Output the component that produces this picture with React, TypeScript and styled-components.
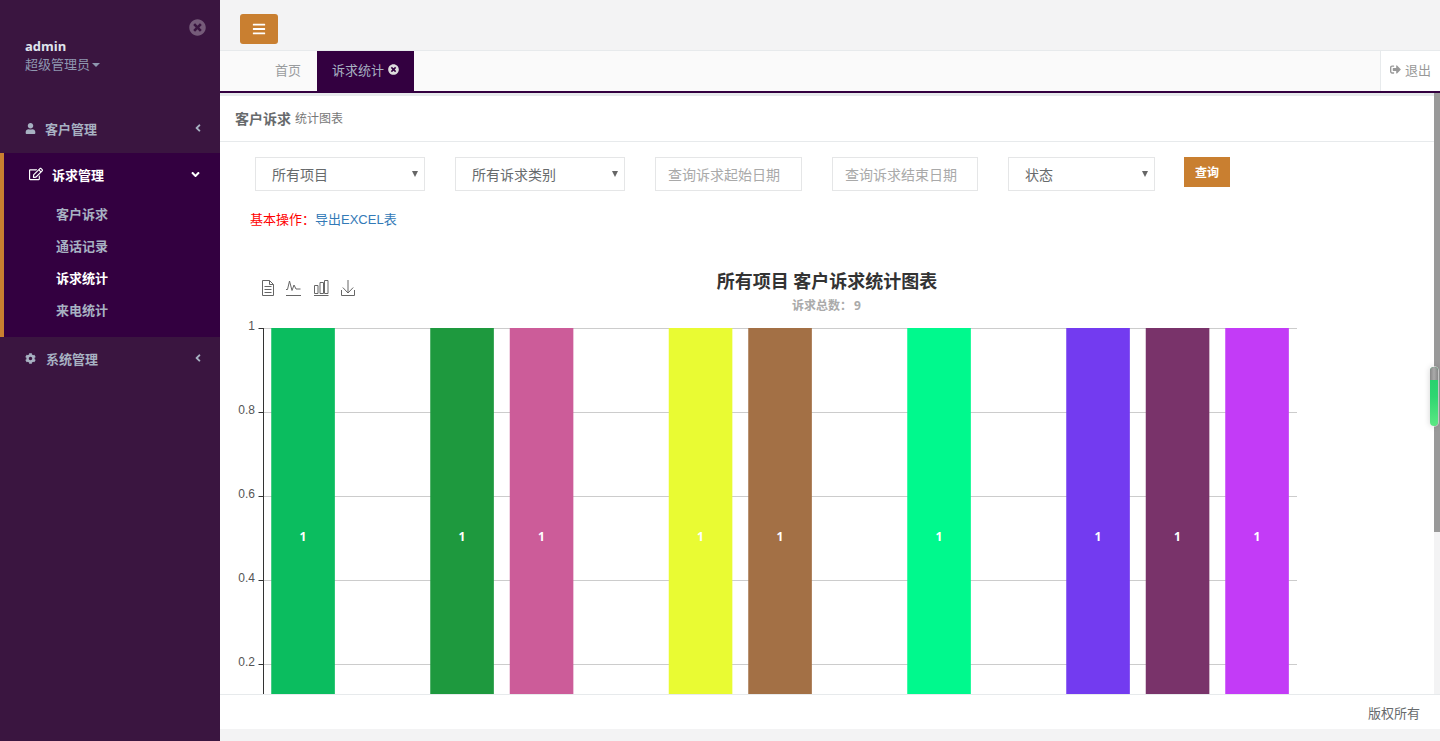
import React from "react";
import styled, { createGlobalStyle } from "styled-components";
import { FaUser, FaRegEdit, FaCog, FaAngleLeft, FaAngleDown, FaBars, FaSignOutAlt, FaTimesCircle } from "react-icons/fa";

const FONT = `"Open Sans", "Noto Sans CJK SC", sans-serif`;
const ARIAL = `"Liberation Sans", "Noto Sans CJK SC", sans-serif`;
const PURPLE = "#330040";
const ORANGE = "#c97f30";

const Global = createGlobalStyle`
  html, body { margin: 0; padding: 0; height: 100%; overflow: hidden; }
  body { font-family: ${FONT}; font-size: 13px; color: #676a6c; background: #f3f3f4; }
  #root { height: 100%; }
  * { box-sizing: border-box; }
`;

const Page = styled.div`display: flex; height: 741px; position: relative;`;

const Sidebar = styled.aside`
  position: relative; width: 220px; flex: none; background: #3a1540; color: #a7b1c2; font-weight: 700;
`;
const SideClose = styled.span`
  position: absolute; left: 189px; top: 19px; font-size: 17px; line-height: 0; color: rgba(255,255,255,.3);
`;
const Profile = styled.div`height: 107px; padding: 37px 0 0 25px;`;
const UserName = styled.div`color: #dfe4ed; font-size: 13px; font-weight: 700; line-height: 18px;`;
const Role = styled.div`color: #8f97b0; font-size: 13px; font-weight: 400; line-height: 18px; display: flex; align-items: center; gap: 2px;`;
const Caret = styled.i`border-top: 4px solid #8f97b0; border-left: 4px solid transparent; border-right: 4px solid transparent; width: 0; height: 0; margin-top: 2px;`;

const Group = styled.div<{ $active?: boolean; $pad?: number }>`
  border-left: ${p => (p.$active ? `4px solid ${ORANGE}` : "0")};
  background: ${p => (p.$active ? PURPLE : "transparent")};
  padding-bottom: ${p => p.$pad ?? 0}px;
`;
const MenuRow = styled.div<{ $active?: boolean; $gap: number }>`
  height: ${p => (p.$active ? "42px" : "44px")}; margin-bottom: ${p => (p.$active ? "3px" : "0")};
  display: flex; align-items: center;
  padding: 0 ${p => (p.$active ? "18px 0" : "16px 2px")} 25px;
  gap: ${p => p.$gap}px; font-size: 13px; color: ${p => (p.$active ? "#fff" : "#a7b1c2")};
  svg { flex: none; }
`;
const MenuLabel = styled.span`flex: 1;`;
const SubItem = styled.div<{ $active?: boolean }>`
  height: 32px; line-height: 32px; padding-left: 52px; font-size: 13px; color: ${p => (p.$active ? "#fff" : "#a7b1c2")};
`;

const Main = styled.main`flex: 1; min-width: 0; display: flex; flex-direction: column; background: #f3f3f4;`;
const TopBar = styled.div`height: 51px; flex: none; padding: 14px 0 0 20px; border-bottom: 1px solid #e7eaec;`;
const MenuBtn = styled.button`
  width: 38px; height: 30px; border: 0; border-radius: 3px; background: ${ORANGE}; color: #fff;
  display: flex; align-items: center; justify-content: center; font-size: 14px; padding: 0;
`;
const TabBar = styled.div`
  height: 42px; flex: none; display: flex; background: #fafafa; border-bottom: 2px solid ${PURPLE}; padding-left: 40px;
`;
const Tab = styled.div<{ $active?: boolean }>`
  height: 40px; padding: 0 15px 4px; display: flex; align-items: center; gap: 4px; font-size: 13px;
  margin-left: ${p => (p.$active ? "1px" : "0")};
  background: ${p => (p.$active ? PURPLE : "transparent")};
  color: ${p => (p.$active ? "#a7b1c2" : "#999c9e")};
  svg { color: #ddd; font-size: 11px; }
`;
const Logout = styled.div`
  margin-left: auto; width: 60px; height: 40px; background: #fff; border-left: 1px solid #e7eaec; color: #999;
  display: flex; align-items: center; padding: 0 0 4px 9px; gap: 4px; font-size: 13px;
  svg { font-size: 11px; }
`;
const Workspace = styled.div`position: relative; flex: 1; min-height: 0; display: flex; flex-direction: column;`;
const Band = styled.div`height: 3px; flex: none; background: #e7eaec;`;
const Scroller = styled.div`flex: 1; min-height: 0; overflow: hidden; background: #fff;`;
const ScrollTrack = styled.div`position: absolute; right: 0; top: 0; bottom: 0; width: 6px; background: #f3f3f4;`;
const ScrollThumb = styled.div`height: 439px; background: #999;`;

const PanelHead = styled.div`
  height: 46px; padding: 0 0 2px 15px; border-bottom: 1px solid #e7eaec; display: flex; align-items: center; gap: 4px;
`;
const PanelTitle = styled.b`font-size: 14px; color: #676a6c;`;
const PanelSub = styled.span`font-size: 12px; color: #777;`;
const Filters = styled.div`display: flex; align-items: flex-start; gap: 30px; padding: 15px 0 0 35px;`;
const SelectWrap = styled.div<{ $w: number }>`
  position: relative; width: ${p => p.$w}px; height: 34px;
  &::after {
    content: ""; position: absolute; right: 7px; top: 14px; width: 0; height: 0;
    border-top: 6px solid #666; border-left: 3.5px solid transparent; border-right: 3.5px solid transparent;
  }
`;
const Select = styled.select`
  width: 100%; height: 34px; appearance: none; background: #fff; border: 1px solid #e5e6e7; border-radius: 0;
  padding: 0 0 0 16px; font: 14px ${FONT}; color: #676a6c; outline: none;
`;
const DateInput = styled.input<{ $w: number }>`
  width: ${p => p.$w}px; height: 34px; border: 1px solid #e5e6e7; padding: 0 12px; font: 14px ${FONT}; outline: none;
  &::placeholder { color: #a9a9a9; opacity: 1; }
`;
const QueryBtn = styled.button`
  width: 46px; height: 30px; margin-left: -1px; border: 0; background: ${ORANGE}; color: #fff; font: 700 12px ${FONT}; padding: 0;
`;
const Ops = styled.div`padding: 19px 0 0 30px; font: 13px/20px ${ARIAL}; color: #f00;`;
const OpsLink = styled.a`color: #337ab7;`;
const ChartBox = styled.div`padding: 20px 0 0 20px;`;
const ChartSvg = styled.svg`display: block; width: 1194px; height: 666px; overflow: visible; font-family: ${FONT};`;
const TickLabel = styled.text`font-family: ${ARIAL}; font-size: 12px; fill: #555;`;

const Footer = styled.footer`
  height: 35px; flex: none; background: #fff; border-top: 1px solid #e7eaec; text-align: right; padding-right: 20px;
  line-height: 36px; font-size: 13px; color: #676a6c;
`;
const BottomGap = styled.div`height: 12px; flex: none;`;

const Slider = styled.div`
  position: absolute; left: 1430px; top: 367px; width: 8px; height: 59px; border-radius: 4px; overflow: hidden;
  background: linear-gradient(#1fa858 0, #25cf6c 8%, #2fd671 50%, #5be883 100%);
  box-shadow: 0 0 6px rgba(0,0,0,.18), 0 0 0 1px rgba(255,255,255,.6);
`;
const SliderCap = styled.div`height: 13px; background: linear-gradient(90deg, #888, #aaa 50%, #888);`;

const BAR_COLORS: (string | null)[] = ["#0bbd5f", null, "#1e993e", "#cc5c99", null, "#e9fb33", "#a37045", null, "#00f98d", null, "#733bf0", "#79336a", "#c33bf7"];
const AXIS_X = 263.5, GRID_END = 1297, TOP = 328, BOTTOM = 748;
const SLOT = (GRID_END - AXIS_X) / BAR_COLORS.length;
const TICKS = ["1", "0.8", "0.6", "0.4", "0.2"];

const Toolbox = () => (
  <g fill="none" stroke="#666" strokeWidth="1">
    <path d="M262.500 280.500h7l4 4v11h-11z M269.500 280.500v4h4 M264.500 286.500h7 M264.500 289.500h7 M264.500 292.500h7" />
    <path d="M286 289.500h1.500l2-8.500 2.500 9.500 2-5.500 2 4h4.500 M286 295.500h15" />
    <path d="M314.500 285.500h3.500v8h-3.500z M320 282.500h3.500v11h-3.500z M324.500 280.500h3.500v13h-3.500z M314 295.500h14.500" />
    <path d="M348 280v13 M342.800 287.500l5.200 5.500 5.200-5.500 M341.500 290v5.500h13v-5.500" />
  </g>
);

const Chart = () => (
  <ChartSvg viewBox="240 250 1194 666">
    <Toolbox />
    <text x="827" y="288" textAnchor="middle" fontSize="18" fontWeight="700" fill="#333">所有项目 客户诉求统计图表</text>
    <text x="826.500" y="310" textAnchor="middle" fontSize="12" fontWeight="700" fill="#aaa">{"诉求总数\uFF1A\u20099"}</text>
    {TICKS.map((t, i) => {
      const y = TOP + i * 84;
      return (
        <g key={t}>
          <line x1={AXIS_X} x2={GRID_END} y1={y + 0.5} y2={y + 0.5} stroke="#ccc" />
          <line x1={AXIS_X - 5} x2={AXIS_X} y1={y + 0.5} y2={y + 0.5} stroke="#333" />
          <TickLabel x={AXIS_X - 8.500} y={y + 2} textAnchor="end">{t}</TickLabel>
        </g>
      );
    })}
    {BAR_COLORS.map((c, i) => {
      if (!c) return null;
      const x = AXIS_X + SLOT * i + SLOT * 0.1 - 0.2;
      const w = SLOT * 0.8;
      return (
        <g key={i}>
          <rect x={x} y={TOP} width={w} height={BOTTOM - TOP} fill={c} />
          <text x={x + w / 2} y={541} textAnchor="middle" fontSize="12" fontWeight="700" fill="#fff">1</text>
        </g>
      );
    })}
    <line x1={AXIS_X} x2={AXIS_X} y1={TOP} y2={BOTTOM} stroke="#333" />
  </ChartSvg>
);

export default function App() {
  return (
    <Page>
      <Global />
      <Sidebar>
        <SideClose><FaTimesCircle /></SideClose>
        <Profile>
          <UserName>admin</UserName>
          <Role>超级管理员<Caret /></Role>
        </Profile>
        <Group $pad={2}>
          <MenuRow $gap={9}><FaUser size={11} /><MenuLabel>客户管理</MenuLabel><FaAngleLeft size={12} /></MenuRow>
        </Group>
        <Group $active $pad={11}>
          <MenuRow $active $gap={9}><FaRegEdit size={14} /><MenuLabel>诉求管理</MenuLabel><FaAngleDown size={13} /></MenuRow>
          <SubItem>客户诉求</SubItem>
          <SubItem>通话记录</SubItem>
          <SubItem $active>诉求统计</SubItem>
          <SubItem>来电统计</SubItem>
        </Group>
        <Group>
          <MenuRow $gap={10}><FaCog size={11} /><MenuLabel>系统管理</MenuLabel><FaAngleLeft size={12} /></MenuRow>
        </Group>
      </Sidebar>
      <Main>
        <TopBar><MenuBtn><FaBars /></MenuBtn></TopBar>
        <TabBar>
          <Tab>首页</Tab>
          <Tab $active>诉求统计<FaTimesCircle /></Tab>
          <Logout><FaSignOutAlt />退出</Logout>
        </TabBar>
        <Workspace>
          <Band />
          <Scroller>
            <PanelHead><PanelTitle>客户诉求</PanelTitle><PanelSub>统计图表</PanelSub></PanelHead>
            <Filters>
              <SelectWrap $w={170}><Select defaultValue="a"><option value="a">所有项目</option></Select></SelectWrap>
              <SelectWrap $w={170}><Select defaultValue="a"><option value="a">所有诉求类别</option></Select></SelectWrap>
              <DateInput $w={147} placeholder="查询诉求起始日期" />
              <DateInput $w={146} placeholder="查询诉求结束日期" />
              <SelectWrap $w={147}><Select defaultValue="a"><option value="a">状态</option></Select></SelectWrap>
              <QueryBtn>查询</QueryBtn>
            </Filters>
            <Ops>{"基本操作\uFF1A"}<OpsLink>导出EXCEL表</OpsLink></Ops>
            <ChartBox><Chart /></ChartBox>
          </Scroller>
          <ScrollTrack><ScrollThumb /></ScrollTrack>
        </Workspace>
        <Footer>版权所有</Footer>
        <BottomGap />
      </Main>
      <Slider><SliderCap /></Slider>
    </Page>
  );
}
